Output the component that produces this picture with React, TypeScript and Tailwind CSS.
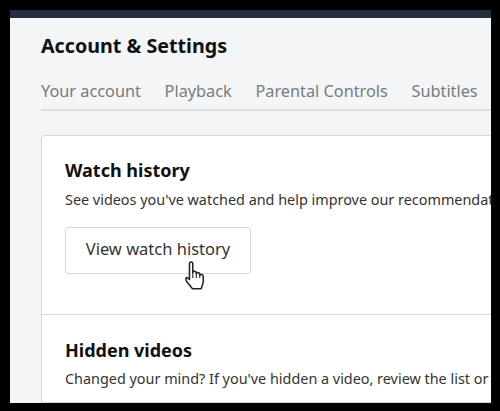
import React from 'react';

const tabs = ['Your account', 'Playback', 'Parental Controls', 'Subtitles'];

const HandCursor: React.FC = () => (
  <svg className="absolute left-[184px] top-[260px]" width="23" height="30" viewBox="0 0 21 27.4">
    <path
      d="M5 3.2C5 1.4 8 1.4 8 3.2V11.5C8.3 9.8 11 9.8 11.2 11.6V12.6C11.6 11 14.2 11.2 14.4 13V14C14.9 12.6 17.4 12.9 17.5 14.8C17.8 17.5 17.8 20 17 22.4L15.6 26.2H7.6C6.6 24.4 4.6 22.4 2.6 19.8C1 17.6 1.8 15.6 3.2 16.2L5 17.8Z"
      fill="#fff"
      stroke="#222"
      strokeWidth="1.4"
      strokeLinejoin="round"
    />
    <path d="M8 11.5V16.5M11.2 12.5V16.5M14.4 13.8V16.5" fill="none" stroke="#222" strokeWidth="1" />
  </svg>
);

export default function App() {
  return (
    <div className="relative w-[500px] h-[411px] bg-black overflow-hidden pl-[10px] pt-[10px] pr-[9px] pb-2 font-['Noto_Sans','Open_Sans',sans-serif]">
      <div className="h-full flex flex-col overflow-hidden bg-[#f3f5f6]">
        <div className="h-[8px] shrink-0 bg-[#232f3e]" />
        <div className="flex-1 flex flex-col pl-[31px] min-h-0">
          <h1 className="mt-[15px] text-[19.7px] leading-[26px] font-bold text-[#0f1111] whitespace-nowrap">Account &amp; Settings</h1>
          <div className="mt-[21px] h-[31px] flex gap-[23.7px] border-b-2 border-[#dcdfe0] text-[16.3px] leading-[22px] text-[#767c7f] whitespace-nowrap">
            {tabs.map((t) => (
              <span key={t}>{t}</span>
            ))}
          </div>
          <div className="mt-[24px] flex-1 w-[600px] bg-white border border-[#d5d9d9] rounded-tl-[4px]">
            <div className="h-[179px] border-b border-[#d5d9d9] pl-[23px] pt-[22px]">
              <h2 className="text-[18px] leading-[24px] font-bold text-[#0f1111]">Watch history</h2>
              <p className="mt-[8px] text-[14.4px] leading-[20px] text-[#333] whitespace-nowrap">See videos you've watched and help improve our recommendations</p>
              <button className="mt-[17px] w-[186px] h-[47px] pb-[2px] bg-white border border-[#d5d9d9] rounded-[3px] text-[16.5px] text-[#333]">
                View watch history
              </button>
            </div>
            <div className="pl-[23px] pt-[23px]">
              <h2 className="text-[18px] leading-[24px] font-bold text-[#0f1111]">Hidden videos</h2>
              <p className="mt-[7px] text-[14.4px] leading-[20px] text-[#333] whitespace-nowrap">Changed your mind? If you've hidden a video, review the list or</p>
            </div>
          </div>
        </div>
      </div>
      <HandCursor />
    </div>
  );
}
